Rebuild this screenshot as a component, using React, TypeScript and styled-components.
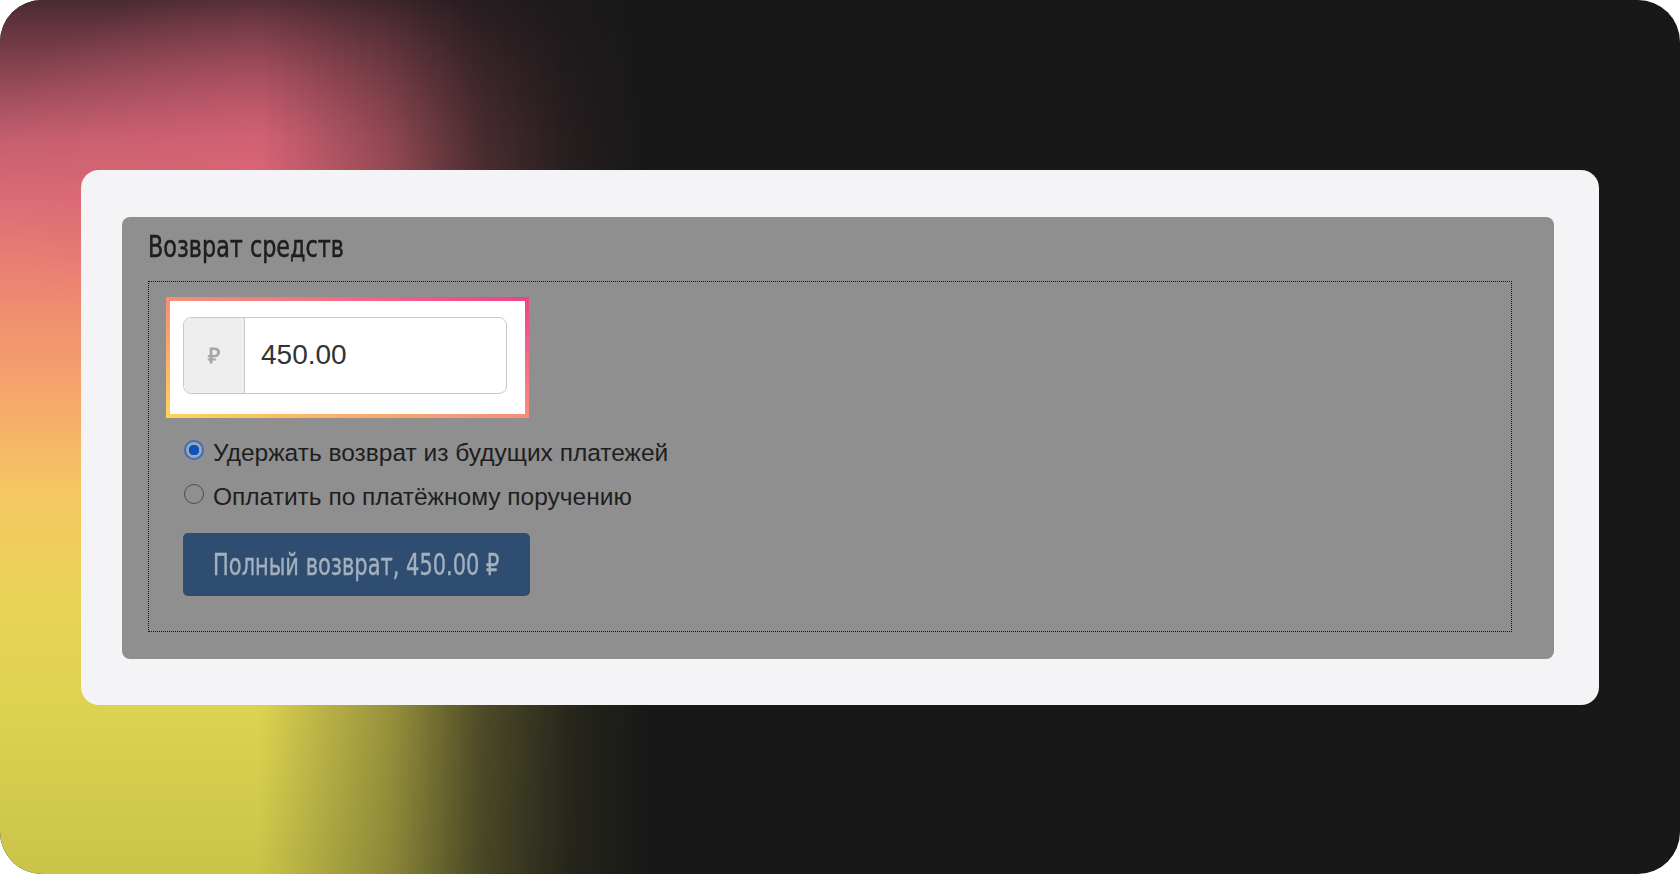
import React from "react";
import styled, { createGlobalStyle } from "styled-components";

const GlobalStyle = createGlobalStyle`
  html, body {
    margin: 0;
    padding: 0;
    background: #ffffff;
  }
  body {
    font-family: "Liberation Sans", Arial, sans-serif;
  }
  * { box-sizing: border-box; }
`;

const narrow = `"DejaVu Sans Condensed", "Liberation Sans", sans-serif`;

const Frame = styled.div`
  position: relative;
  width: 1680px;
  height: 874px;
  border-radius: 42px;
  overflow: hidden;
  background: #181818;
  display: flex;
  align-items: center;
  justify-content: center;

  &::before {
    content: "";
    position: absolute;
    inset: 0;
    background:
      radial-gradient(ellipse 300px 200px at 290px 170px, rgba(226, 100, 120, 0.55), rgba(226, 100, 120, 0) 100%),
      linear-gradient(
        180deg,
        #4a2a33 0%,
        #8a4452 8%,
        #c45f6e 16%,
        #db6c76 23%,
        #ec8472 32%,
        #f5a36c 44%,
        #f6c662 56%,
        #e9d358 68%,
        #dcd250 82%,
        #c9c349 100%
      );
    -webkit-mask-image: linear-gradient(
      to right,
      #000 0px,
      #000 260px,
      rgba(0, 0, 0, 0.65) 390px,
      rgba(0, 0, 0, 0.28) 480px,
      rgba(0, 0, 0, 0.08) 570px,
      transparent 650px
    );
    mask-image: linear-gradient(
      to right,
      #000 0px,
      #000 260px,
      rgba(0, 0, 0, 0.65) 390px,
      rgba(0, 0, 0, 0.28) 480px,
      rgba(0, 0, 0, 0.08) 570px,
      transparent 650px
    );
  }
`;

const Card = styled.div`
  position: relative;
  z-index: 1;
  width: 1518px;
  height: 535px;
  background: #f4f4f6;
  border-radius: 18px;
  padding: 47px 45px 46px 41px;
  display: flex;
`;

const Panel = styled.section`
  flex: 1;
  display: flex;
  flex-direction: column;
  align-items: flex-start;
  background: #8f8f8f;
  border-radius: 8px;
  padding: 11px 42px 27px 26px;
`;

const Title = styled.h2`
  display: inline-block;
  margin: 0;
  font-family: ${narrow};
  font-weight: 400;
  font-size: 31px;
  line-height: 36px;
  color: #1d1d1d;
  -webkit-text-stroke: 0.5px #1d1d1d;
  transform: scaleX(0.8);
  transform-origin: left center;
  white-space: nowrap;
`;

const Fieldset = styled.div`
  align-self: stretch;
  flex: 1;
  margin-top: 17px;
  border: 1px dotted #161616;
  padding: 15px 17px;
  display: flex;
  flex-direction: column;
  align-items: flex-start;
`;

const Spotlight = styled.div`
  display: inline-flex;
  padding: 16px 18px 20px 13px;
  border: 4px solid transparent;
  background:
    linear-gradient(#ffffff, #ffffff) padding-box,
    linear-gradient(to top right, #ffd45a 0%, #f8a26f 35%, #f47a82 65%, #f03f8e 100%) border-box;
`;

const InputGroup = styled.div`
  display: flex;
  width: 324px;
  height: 77px;
  border: 1.5px solid #c8c8c8;
  border-radius: 8px;
  overflow: hidden;
  background: #ffffff;
`;

const Addon = styled.span`
  width: 61px;
  flex: none;
  display: flex;
  align-items: center;
  justify-content: center;
  background: #eeeeee;
  border-right: 1.5px solid #c8c8c8;
  color: #a6a6a6;
  font-family: "Liberation Sans", Arial, sans-serif;
  font-weight: 700;
  font-size: 21px;
`;

const AmountInput = styled.input`
  flex: 1;
  min-width: 0;
  border: none;
  outline: none;
  padding: 0 16px;
  font-family: "Liberation Sans", Arial, sans-serif;
  font-size: 28px;
  color: #333333;
  background: transparent;
`;

const Options = styled.div`
  margin-top: 21px;
  padding-left: 18px;
  display: flex;
  flex-direction: column;
  gap: 16px;
`;

const OptionLabel = styled.label`
  display: flex;
  align-items: center;
  gap: 9px;
  font-family: "Liberation Sans", Arial, sans-serif;
  font-size: 24.5px;
  line-height: 28px;
  color: #1e1e1e;
  cursor: pointer;
`;

const Radio = styled.input.attrs({ type: "radio" })`
  appearance: none;
  -webkit-appearance: none;
  margin: -6px 0 0 0;
  width: 20px;
  height: 20px;
  flex: none;
  border-radius: 50%;
  border: 1.5px solid #4a4a4a;
  background: transparent;

  &:checked {
    border: 2px solid #3b6fb6;
    background: radial-gradient(circle, #0b52bd 0, #0b52bd 5px, #9aa6b4 5.5px, #9aa6b4 100%);
  }
`;

const OptionText = styled.span`
  display: block;
  white-space: nowrap;
`;

const RefundButton = styled.button`
  margin-top: 22px;
  margin-left: 17px;
  width: 347px;
  height: 63px;
  padding: 0;
  border: none;
  border-radius: 5px;
  background: #2f4d70;
  display: flex;
  align-items: center;
  justify-content: center;
  cursor: pointer;
`;

const ButtonLabel = styled.span`
  display: inline-block;
  color: #a4b0bd;
  -webkit-text-stroke: 0.4px #a4b0bd;
  font-family: ${narrow};
  font-size: 30px;
  line-height: 63px;
  white-space: nowrap;
  transform: scaleX(0.777);
`;

export default function App() {
  const [choice, setChoice] = React.useState("hold");
  return (
    <>
      <GlobalStyle />
      <Frame>
        <Card>
          <Panel>
            <Title>Возврат средств</Title>
            <Fieldset>
              <Spotlight>
                <InputGroup>
                  <Addon>₽</Addon>
                  <AmountInput defaultValue="450.00" />
                </InputGroup>
              </Spotlight>
              <Options>
                <OptionLabel>
                  <Radio
                    name="refund"
                    checked={choice === "hold"}
                    onChange={() => setChoice("hold")}
                  />
                  <OptionText>Удержать возврат из будущих платежей</OptionText>
                </OptionLabel>
                <OptionLabel>
                  <Radio
                    name="refund"
                    checked={choice === "pay"}
                    onChange={() => setChoice("pay")}
                  />
                  <OptionText>Оплатить по платёжному поручению</OptionText>
                </OptionLabel>
              </Options>
              <RefundButton>
                <ButtonLabel>Полный возврат, 450.00 ₽</ButtonLabel>
              </RefundButton>
            </Fieldset>
          </Panel>
        </Card>
      </Frame>
    </>
  );
}
